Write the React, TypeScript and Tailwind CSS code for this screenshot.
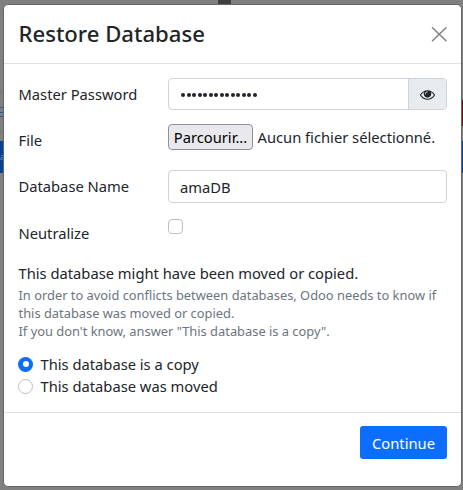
function Backdrop() {
  return (
    <div className="absolute inset-0 flex justify-between bg-[#808080]">
      <div className="w-1 text-[15px]">
        <div className="mt-[92px] h-[15px] border-t border-[#747474]" />
        <div className="h-[14px] w-1 border-t border-[#2b5b9f] pt-[4px]">
          <div className="h-[5px] border-y border-[#2b5b9f]" />
        </div>
        <div className="mt-[11px] h-[9px] border-t border-[#747474]" />
        <div className="flex h-[32px] items-center bg-[#06419a] text-[8px] text-[#8094b8]">a</div>
      </div>
      <div className="mr-[16px] h-[5px] w-[13px] self-start bg-[#3f3f3f]" />
      <div className="w-[3px]">
        <div className="mt-[100px] h-[26px] bg-[#6b1020]" />
        <div className="mt-[15px] h-[32px] bg-[#06419a]" />
      </div>
    </div>
  );
}

function EyeIcon() {
  return (
    <svg className="size-[15px]" viewBox="0 0 1792 1792" fill="currentColor">
      <path d="M1664 960q-152-236-381-353 61 104 61 225 0 185-131.5 316.5t-316.5 131.5-316.5-131.5-131.5-316.5q0-121 61-225-229 117-381 353 133 205 333.5 326.5t434.5 121.5 434.5-121.5 333.5-326.5zm-720-384q0-20-14-34t-34-14q-125 0-214.5 89.5t-89.5 214.5q0 20 14 34t34 14 34-14 14-34q0-86 61-147t147-61q20 0 34-14t14-34zm848 384q0 34-20 69-140 230-376.5 368.5t-499.5 138.5-499.5-139-376.5-368q-20-35-20-69t20-69q140-229 376.5-368t499.5-139 499.5 139 376.5 368q20 35 20 69z" />
    </svg>
  );
}

function Header() {
  return (
    <header className="flex h-[59px] items-center justify-between border-b border-[#dee2e6] pr-[14px] pl-[14.5px]">
      <h4 className="pb-[2px] text-[22.1px] leading-[30px] font-medium">Restore Database</h4>
      <button aria-label="Close" className="text-[#808080]">
        <svg className="size-[16px]" viewBox="0 0 16 16" fill="none" stroke="currentColor" strokeWidth="1.5" strokeLinecap="round">
          <path d="M1.5 1.7 15 14.7M15 1.7 1.5 14.7" />
        </svg>
      </button>
    </header>
  );
}

function Radio({ checked, label }: { checked?: boolean; label: string }) {
  return (
    <label className="flex h-[22px] items-center">
      <span
        className={
          checked
            ? "flex size-[15px] items-center justify-center rounded-full bg-[#0d6efd]"
            : "size-[15px] rounded-full border border-[#bfbfbf]"
        }
      >
        {checked && <span className="size-[6px] rounded-full bg-white" />}
      </span>
      <span className="ml-[7.5px]">{label}</span>
    </label>
  );
}

export default function App() {
  return (
    <div className="relative h-[490px] w-[463px] overflow-hidden font-['Noto_Sans',sans-serif] text-[14.72px] leading-[22px] whitespace-nowrap text-[#212529]">
      <Backdrop />
      <div className="relative mt-[4px] ml-[3px] h-[483px] w-[459px] rounded-[5px] border border-[#666666] bg-white">
        <Header />
        <main className="h-[349px] border-b border-[#dee2e6] px-[14px] pt-[14px]">
          <div className="flex h-[46px]">
            <label className="w-[150px] pt-[5px] pl-[0.5px]">Master Password</label>
            <div className="flex h-[32px] w-[279px] overflow-hidden rounded-[4px] border border-[#ced4da]">
              <div className="flex flex-1 items-center gap-[1.5px] pt-px pl-[12px]">
                {Array.from({ length: 14 }, (_, i) => (
                  <span key={i} className="size-[4px] rounded-full bg-[#212529]" />
                ))}
              </div>
              <button className="flex w-[38px] items-center justify-center border-l border-[#ced4da] bg-[#e9ecef]">
                <EyeIcon />
              </button>
            </div>
          </div>
          <div className="flex h-[46px]">
            <label className="w-[150px] pt-[5px] pl-[0.5px]">File</label>
            <div className="flex h-[26px] items-center">
              <button className="h-[26px] w-[85px] rounded-[4px] border border-[#8f8f9d] bg-[#e9e9ed] text-center text-black">Parcourir...</button>
              <span className="ml-[4.5px]">Aucun fichier sélectionné.</span>
            </div>
          </div>
          <div className="flex h-[46px]">
            <label className="w-[150px] pt-[5px] pl-[0.5px]">Database Name</label>
            <div className="flex h-[33px] w-[279px] items-center rounded-[4px] border border-[#ced4da] pl-[11px]">amaDB</div>
          </div>
          <div className="flex h-[46px]">
            <label className="w-[150px] pt-[5.5px] pl-[0.5px]">Neutralize</label>
            <span className="mt-[3px] size-[15px] rounded-[4px] border border-[#bfbfbf]" />
          </div>
          <p className="pl-[0.5px]">This database might have been moved or copied.</p>
          <p className="mt-[2px] pl-[0.5px] text-[12.87px] leading-[18px] text-[#6c757d]">
            In order to avoid conflicts between databases, Odoo needs to know if
            <br />
            this database was moved or copied.
            <br />
            If you don't know, answer "This database is a copy".
          </p>
          <div className="mt-[13px]">
            <Radio checked label="This database is a copy" />
            <Radio label="This database was moved" />
          </div>
        </main>
        <footer className="flex justify-end pt-[13px] pr-[14px]">
          <button className="h-[33px] w-[87px] rounded-[3px] bg-[#0d6efd] text-white">Continue</button>
        </footer>
      </div>
    </div>
  );
}
